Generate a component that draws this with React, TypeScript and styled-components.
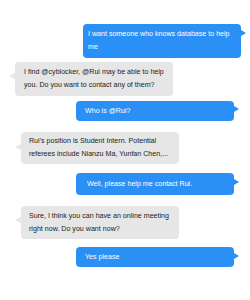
import React from "react";
import styled, { createGlobalStyle } from "styled-components";

const Global = createGlobalStyle`
  html, body { margin: 0; padding: 0; background: #ffffff; }
  body { font-family: "Liberation Sans", Arial, sans-serif; }
`;

const Chat = styled.div`
  width: 250px;
  height: 300px;
  display: flex;
  flex-direction: column;
  box-sizing: border-box;
  padding-top: 24px;
  overflow: hidden;
`;

const Bubble = styled.div<{
  $me: boolean;
  $x: number;
  $mt: number;
  $px: number;
  $h: number;
  $tail: number;
}>`
  position: relative;
  box-sizing: border-box;
  width: 158px;
  min-height: ${(p) => p.$h}px;
  margin-left: ${(p) => p.$x}px;
  margin-top: ${(p) => p.$mt}px;
  padding: 3px 4px 3px ${(p) => p.$px}px;
  display: flex;
  flex-direction: column;
  justify-content: center;
  border-radius: 4px;
  background: ${(p) => (p.$me ? "#2b90f5" : "#e6e6e6")};
  color: ${(p) => (p.$me ? "#ffffff" : "#222222")};
  font-size: 7.1px;
  line-height: 13px;
  white-space: nowrap;

  &::after {
    content: "";
    position: absolute;
    top: ${(p) => p.$tail}px;
    width: 0;
    height: 0;
    border-top: 3px solid transparent;
    border-bottom: 3px solid transparent;
    ${(p) =>
      p.$me
        ? `right: -5px; border-left: 5px solid #2b90f5;`
        : `left: -6px; border-right: 6px solid #e6e6e6;`}
  }
`;

type Msg = {
  me: boolean;
  x: number;
  mt: number;
  px: number;
  h: number;
  tail: number;
  lines: string[];
};

const messages: Msg[] = [
  { me: true, x: 83, mt: 0, px: 5, h: 34, tail: 6, lines: ["I want someone who knows database to help", "me"] },
  { me: false, x: 15, mt: 4, px: 9, h: 34, tail: 11, lines: ["I find @cyblocker, @Rui may be able to help", "you. Do you want to contact any of them?"] },
  { me: true, x: 76, mt: 5, px: 9, h: 20, tail: 5, lines: ["Who is @Rui?"] },
  { me: false, x: 21, mt: 11, px: 8, h: 32, tail: 12, lines: ["Rui's position is Student Intern. Potential", "referees include Nianzu Ma, Yunfan Chen,..."] },
  { me: true, x: 76, mt: 9, px: 11, h: 22, tail: 6, lines: ["Well, please help me contact Rui."] },
  { me: false, x: 21, mt: 11, px: 8, h: 33, tail: 11, lines: ["Sure, I think you can have an online meeting", "right now. Do you want now?"] },
  { me: true, x: 76, mt: 8, px: 9, h: 20, tail: 6, lines: ["Yes please"] },
];

export default function App() {
  return (
    <>
      <Global />
      <Chat>
        {messages.map((m, i) => (
          <Bubble
            key={i}
            $me={m.me}
            $x={m.x}
            $mt={m.mt}
            $px={m.px}
            $h={m.h}
            $tail={m.tail}
          >
            {m.lines.map((l, j) => (
              <span key={j}>{l}</span>
            ))}
          </Bubble>
        ))}
      </Chat>
    </>
  );
}
